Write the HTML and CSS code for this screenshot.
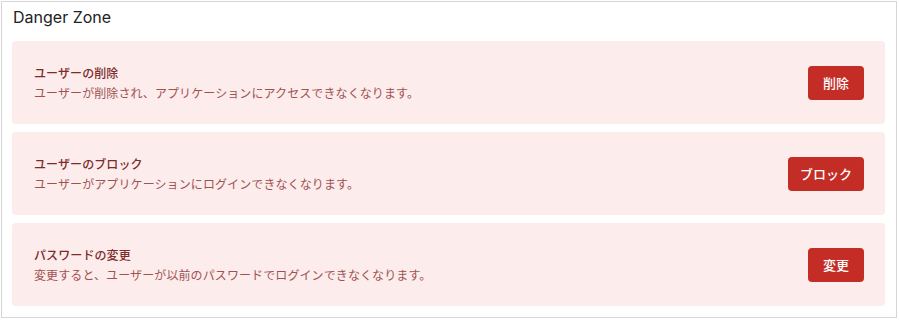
FILE: index.html
```html
<!DOCTYPE html>
<html lang="ja">
<head>
    <meta charset="UTF-8">
    <meta name="viewport" content="width=device-width, initial-scale=1.0">
    <title>Danger Zone</title>
    <link rel="stylesheet" href="styles.css">
</head>
<body>

    <div class="card">
        <h2 class="card-title">Danger Zone</h2>

        <div class="danger-list">
            <div class="danger-item">
                <div class="danger-text">
                    <div class="danger-name">ユーザーの削除</div>
                    <div class="danger-desc">ユーザーが削除され、アプリケーションにアクセスできなくなります。</div>
                </div>
                <button class="danger-btn">削除</button>
            </div>
            <div class="danger-item">
                <div class="danger-text">
                    <div class="danger-name">ユーザーのブロック</div>
                    <div class="danger-desc">ユーザーがアプリケーションにログインできなくなります。</div>
                </div>
                <button class="danger-btn">ブロック</button>
            </div>
            <div class="danger-item">
                <div class="danger-text">
                    <div class="danger-name">パスワードの変更</div>
                    <div class="danger-desc">変更すると、ユーザーが以前のパスワードでログインできなくなります。</div>
                </div>
                <button class="danger-btn">変更</button>
            </div>
        </div>
    </div>

</body>
</html>
```

FILE: styles.css
```css
* {
    box-sizing: border-box;
    margin: 0;
    padding: 0;
}

body {
    padding: 1px 2px 0 1px;
    background: #fff;
    font-family: Inter, "Noto Sans CJK JP", sans-serif;
}

.card {
    height: 317px;
    border: 1px solid #d6d6d6;
    padding: 3px 11px 11px 10px;
    background: #fff;
}

.card-title {
    font-size: 16px;
    font-weight: 400;
    line-height: 24px;
    color: #222;
    padding-left: 1px;
    margin-bottom: 12px;
}

/* Danger items */
.danger-list {
    display: flex;
    flex-direction: column;
    gap: 8px;
}

.danger-item {
    height: 83px;
    display: flex;
    align-items: center;
    justify-content: space-between;
    padding: 0 21px 0 22px;
    background: #fcecec;
    border-radius: 4px;
}

.danger-text {
    font-family: "Noto Sans CJK JP", sans-serif;
    font-size: 12px;
    line-height: 20px;
    letter-spacing: 0.1px;
}

.danger-name {
    font-weight: 500;
    color: #7d2b2b;
}

.danger-desc {
    color: #a05252;
}

.danger-btn {
    min-width: 56px;
    height: 34px;
    padding: 0 12px;
    border: none;
    border-radius: 4px;
    background: #c42d26;
    color: #fff;
    font-family: "Noto Sans CJK JP", sans-serif;
    font-size: 13px;
    font-weight: 500;
    cursor: pointer;
}
```
